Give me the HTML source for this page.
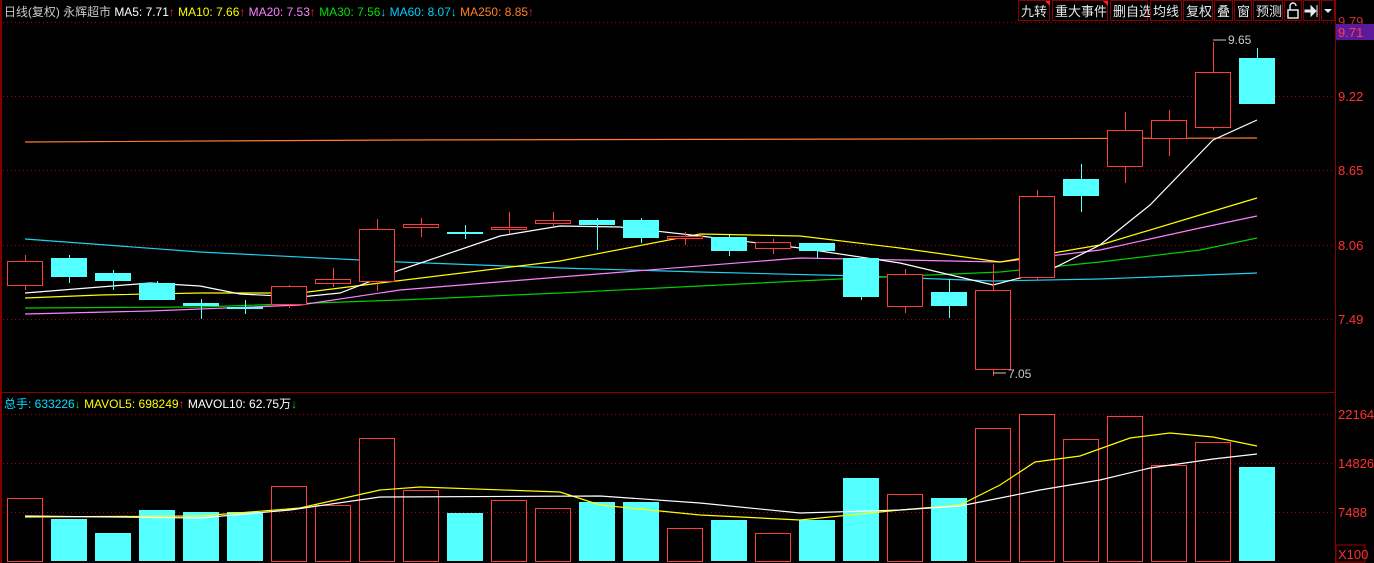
<!DOCTYPE html>
<html><head><meta charset="utf-8"><style>
body{margin:0;background:#000;width:1374px;height:563px;overflow:hidden;font-family:"Liberation Sans","Noto Sans CJK SC",sans-serif}
svg{display:block}
</style></head><body>
<svg id="s" width="1374" height="563" xmlns="http://www.w3.org/2000/svg" font-family="Liberation Sans, Noto Sans CJK SC, sans-serif">
<rect width="1374" height="563" fill="#000"/>
<line x1="1" y1="0" x2="1" y2="563" stroke="#800000" stroke-width="2"/>
<line x1="1335.5" y1="0" x2="1335.5" y2="563" stroke="#8b0000"/>
<line x1="0" y1="392.5" x2="1335" y2="392.5" stroke="#8b0000"/>
<g stroke="#a00000" stroke-dasharray="1,3">
<line x1="3" y1="22.5" x2="1335" y2="22.5"/>
<line x1="3" y1="96.5" x2="1335" y2="96.5"/><line x1="3" y1="170.5" x2="1335" y2="170.5"/>
<line x1="3" y1="245.5" x2="1335" y2="245.5"/><line x1="3" y1="319.5" x2="1335" y2="319.5"/>
<line x1="3" y1="414.5" x2="1335" y2="414.5"/><line x1="3" y1="463.5" x2="1335" y2="463.5"/><line x1="3" y1="512.5" x2="1335" y2="512.5"/>
</g>
<g font-size="13" fill="#ff3030">
<text x="1338" y="26" fill="#d03030">9.79</text>
<text x="1338" y="101">9.22</text><text x="1338" y="175">8.65</text><text x="1338" y="250">8.06</text><text x="1338" y="324">7.49</text>
<text x="1338" y="419">22164</text><text x="1338" y="468">14826</text><text x="1338" y="517">7488</text>
</g>
<rect x="1336" y="545" width="29" height="17" fill="none" stroke="#a00000"/>
<text x="1338" y="559" font-size="13" fill="#ff3030">X100</text>
<rect x="1336" y="24" width="38" height="16" fill="#5a1a9a"/>
<text x="1338" y="37" font-size="13" fill="#ff4040">9.71</text>
<text x="4" y="16" font-size="12" textLength="530" lengthAdjust="spacingAndGlyphs"><tspan fill="#c8c8c8">日线(复权)  永辉超市  </tspan><tspan fill="#fff">MA5: 7.71</tspan><tspan fill="#ff2020">↑ </tspan><tspan fill="#ffff00">MA10: 7.66</tspan><tspan fill="#ff2020">↑ </tspan><tspan fill="#ff80ff">MA20: 7.53</tspan><tspan fill="#ff2020">↑ </tspan><tspan fill="#00e000">MA30: 7.56</tspan><tspan fill="#00d0ff">↓ MA60: 8.07↓ </tspan><tspan fill="#ff8020">MA250: 8.85</tspan><tspan fill="#ff2020">↑</tspan></text>
<text x="4" y="408" font-size="12"><tspan fill="#00e0ff">总手: 633226</tspan><tspan fill="#00e000">↓ </tspan><tspan fill="#ffff00">MAVOL5: 698249</tspan><tspan fill="#ff2020">↑ </tspan><tspan fill="#fff">MAVOL10: 62.75万</tspan><tspan fill="#00e000">↓</tspan></text>
<g id="btn" font-size="13" fill="#e8e8e8"></g>
<g id="c"></g>
<text x="1228" y="44" font-size="12" fill="#c8c8c8">9.65</text><line x1="1213" y1="40" x2="1226" y2="40" stroke="#c8c8c8"/>
<text x="1008" y="378" font-size="12" fill="#c8c8c8">7.05</text><line x1="993" y1="373" x2="1006" y2="373" stroke="#c8c8c8"/>
</svg>
<script>
var NS="http://www.w3.org/2000/svg",g=document.getElementById('c'),b=document.getElementById('btn');
function el(t,a,p){var e=document.createElementNS(NS,t);for(var k in a)e.setAttribute(k,a[k]);(p||g).appendChild(e);return e;}
var bt=[["九转",1018,1050],["重大事件",1052,1108],["删自选",1110,1148],["均线",1150,1182],["复权",1183,1213],["叠",1214,1233],["窗",1234,1252],["预测",1253,1283],["",1284,1302],["",1303,1320],["",1321,1335]];
bt.forEach(function(q){el('rect',{x:q[1]+.5,y:0.5,width:q[2]-q[1]-1,height:20,fill:'#000',stroke:'#8b0000'},b);if(q[0]){var t=el('text',{x:q[1]+3,y:16},b);t.textContent=q[0];}});
el('path',{d:'M1045 1h5v5z M1103 1h5v5z',fill:'#ff2020'},b);
el('path',{d:'M1288 10v8h10v-8zM1290 10v-4a3 3 0 0 1 6 0',fill:'none',stroke:'#e8e8e8','stroke-width':1.5},b);
el('path',{d:'M1305 10h6v-4l5 5-5 5v-4h-6zM1317 5v12',fill:'#e8e8e8',stroke:'#e8e8e8'},b);
el('path',{d:'M1324 9h8l-4 4z',fill:'#e8e8e8'},b);
var R='#ff3c3c',C='#54ffff';
var K=[[261,285,255,290,0],[258,277,255,283,1],[273,281,270,290,1],[283,300,281,300,1],[303,306,299,319,1],[307,309,300,314,1],[286,304,285,308,0],[279,283,268,287,0],[229,281,219,291,0],[224,227,218,237,0],[232,234,225,239,1],[227,229,212,234,0],[220,223,212,226,0],[220,225,218,250,1],[220,238,218,243,1],[236,238,232,245,0],[237,251,235,256,1],[242,248,239,254,0],[243,251,243,258,1],[258,297,258,300,1],[274,306,269,313,0],[292,306,279,318,1],[290,369,264,376,0],[196,277,190,280,0],[179,196,164,212,1],[130,166,112,183,0],[120,138,110,156,0],[72,127,42,130,0],[58,104,48,104,1]];
var V=[[498,0],[519,1],[533,1],[510,1],[512,1],[512,1],[486,0],[505,0],[438,0],[490,0],[513,1],[500,0],[508,0],[502,1],[502,1],[528,0],[520,1],[533,0],[520,1],[478,1],[494,0],[498,1],[428,0],[414,0],[439,0],[416,0],[465,0],[442,0],[467,1]];
function line(pts,col){el('polyline',{points:pts,fill:'none',stroke:col,'stroke-width':1.2});}
line("25,142 400,140 900,139 1257,138","#ff7a30");
line("25,239 200,252 400,262 560,268 700,272 860,276 993,281 1100,279 1257,273","#20d0f0");
line("25,308 200,307 400,300 560,293 700,286 860,278 1000,272 1100,262 1200,250 1257,238","#00d000");
line("25,314 150,311 300,305 400,290 560,277 800,258 1000,262 1100,250 1200,228 1257,216","#ff80ff");
line("25,298 100,295 200,293 300,293 380,283 560,261 700,234 800,236 900,248 1000,262 1100,245 1200,215 1257,198","#ffff00");
line("25,293 100,287 150,283 200,286 240,294 300,297 340,293 400,270 500,236 560,226 620,227 700,236 800,248 900,263 993,285 1050,270 1100,245 1150,205 1213,140 1257,120","#ffffff");
K.forEach(function(k,i){var x=25+44*i,col=k[4]?C:R;
 el('line',{x1:x+.5,y1:k[2],x2:x+.5,y2:k[3],stroke:col});
 var h=Math.max(k[1]-k[0],1);
 if(k[4])el('rect',{x:x-18,y:k[0],width:36,height:h,fill:C});
 else el('rect',{x:x-17.5,y:k[0]+.5,width:35,height:h,fill:'#000',stroke:R});
});
V.forEach(function(v,i){var x=25+44*i;
 if(v[1])el('rect',{x:x-18,y:v[0],width:36,height:561-v[0],fill:C});
 else el('rect',{x:x-17.5,y:v[0]+.5,width:35,height:561-v[0],fill:'none',stroke:R});
});
line("25,517 200,516 300,508 380,490 420,487 560,492 600,505 700,515 800,520 900,510 960,505 1000,485 1035,462 1080,456 1130,438 1170,433 1213,437 1257,446","#ffff00");
line("25,516 200,518 290,510 380,497 600,496 700,503 800,513 900,510 960,506 1040,490 1100,480 1150,468 1213,459 1257,454","#ffffff");
</script>
</body></html>
